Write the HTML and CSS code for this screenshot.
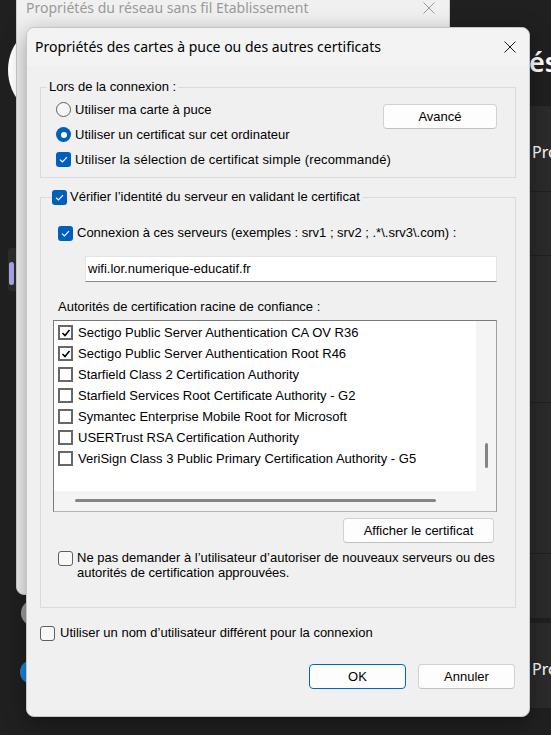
FILE: index.html
```html
<!DOCTYPE html>
<html lang="fr">
<head>
<meta charset="utf-8">
<title>Propriétés des cartes à puce ou des autres certificats</title>
<link rel="stylesheet" href="styles.css">
</head>
<body>
<div class="desktop">
  <div class="settings">
    <aside class="sidebar">
      <div class="avatar"></div>
      <div class="nav-item"><span class="pill"></span></div>
      <div class="dot gray"></div>
      <div class="dot blue"></div>
    </aside>
    <main class="settings-main">
      <h1 class="page-title">Propriétés</h1>
      <div class="rows">
        <div class="srow r1"><span>Propriétés</span></div>
        <div class="srow r2"></div>
        <div class="srow r3"></div>
        <div class="srow r4"></div>
        <div class="srow r5"></div>
        <div class="srow r6"><span>Propriétés</span></div>
      </div>
    </main>
  </div>

  <div class="window back">
    <div class="back-titlebar">
      <span class="back-title">Propriétés du réseau sans fil Etablissement</span>
      <svg class="close back-close" width="12" height="12" viewBox="0 0 12 12"><path d="M0.5 0.5L11.5 11.5M11.5 0.5L0.5 11.5" stroke="#9a9a9a" stroke-width="1" fill="none"/></svg>
    </div>
  </div>

  <div class="window front">
    <div class="titlebar">
      <span class="title">Propriétés des cartes à puce ou des autres certificats</span>
      <svg class="close" width="12" height="12" viewBox="0 0 12 12"><path d="M0.5 0.5L11.5 11.5M11.5 0.5L0.5 11.5" stroke="#1a1a1a" stroke-width="1" fill="none"/></svg>
    </div>
    <div class="dlg-body">
      <div class="group g1">
        <div class="legend">Lors de la connexion :</div>
        <div class="g1-grid">
          <div class="opt r-a"><span class="radio"></span><span>Utiliser ma carte à puce</span></div>
          <div class="opt r-b"><span class="radio on"></span><span>Utiliser un certificat sur cet ordinateur</span></div>
          <button class="btn adv">Avancé</button>
          <div class="opt r-c"><span class="check on"><svg width="15" height="15" viewBox="0 0 15 15"><path d="M4 7.6L6.4 10L11 5.2" stroke="#fff" stroke-width="1.2" fill="none"/></svg></span><span>Utiliser la sélection de certificat simple (recommandé)</span></div>
        </div>
      </div>

      <div class="group g2">
        <div class="legend2"><span class="check on"><svg width="15" height="15" viewBox="0 0 15 15"><path d="M4 7.6L6.4 10L11 5.2" stroke="#fff" stroke-width="1.2" fill="none"/></svg></span><span>Vérifier l’identité du serveur en validant le certificat</span></div>
        <div class="opt servers"><span class="check on"><svg width="15" height="15" viewBox="0 0 15 15"><path d="M4 7.6L6.4 10L11 5.2" stroke="#fff" stroke-width="1.2" fill="none"/></svg></span><span>Connexion à ces serveurs (exemples : srv1 ; srv2 ; .*\.srv3\.com) :</span></div>
        <div class="field">wifi.lor.numerique-educatif.fr</div>
        <div class="list-label">Autorités de certification racine de confiance :</div>
        <div class="listbox">
          <div class="list-content">
            <div class="item"><span class="cbc"><svg width="10" height="10" viewBox="0 0 10 10"><path d="M1.5 5L4 7.5L8.5 2" stroke="#000" stroke-width="1.6" fill="none"/></svg></span><span>Sectigo Public Server Authentication CA OV R36</span></div>
            <div class="item"><span class="cbc"><svg width="10" height="10" viewBox="0 0 10 10"><path d="M1.5 5L4 7.5L8.5 2" stroke="#000" stroke-width="1.6" fill="none"/></svg></span><span>Sectigo Public Server Authentication Root R46</span></div>
            <div class="item"><span class="cbc"></span><span>Starfield Class 2 Certification Authority</span></div>
            <div class="item"><span class="cbc"></span><span>Starfield Services Root Certificate Authority - G2</span></div>
            <div class="item"><span class="cbc"></span><span>Symantec Enterprise Mobile Root for Microsoft</span></div>
            <div class="item"><span class="cbc"></span><span>USERTrust RSA Certification Authority</span></div>
            <div class="item"><span class="cbc"></span><span>VeriSign Class 3 Public Primary Certification Authority - G5</span></div>
          </div>
          <div class="vscroll"><div class="vthumb"></div></div>
          <div class="hscroll"><div class="hthumb"></div></div>
          <div class="corner"></div>
        </div>
        <div class="btn-row"><button class="btn show">Afficher le certificat</button></div>
        <div class="opt multi"><span class="check"></span><span class="multi-text">Ne pas demander à l’utilisateur d’autoriser de nouveaux serveurs ou des autorités de certification approuvées.</span></div>
      </div>

      <div class="opt other-user"><span class="check"></span><span>Utiliser un nom d’utilisateur différent pour la connexion</span></div>

      <div class="footer">
        <button class="btn ok">OK</button>
        <button class="btn">Annuler</button>
      </div>
    </div>
  </div>
</div>
</body>
</html>
```

FILE: styles.css
```css
* { box-sizing: border-box; }
html, body { margin: 0; padding: 0; }
body {
  width: 551px;
  height: 735px;
  overflow: hidden;
  background: #202020;
  font-family: "Liberation Sans", Arial, sans-serif;
  font-size: 13px;
  line-height: 16px;
  color: #000;
}
.desktop { position: relative; width: 551px; height: 735px; overflow: hidden; }

/* Settings app behind */
.settings { position: absolute; left: 0; top: 0; width: 551px; height: 735px; }
.sidebar { position: absolute; left: 0; top: 0; width: 240px; height: 735px; display: flex; flex-direction: column; }
.avatar { margin: 20px 0 0 8px; width: 100px; height: 100px; border-radius: 50%; background: #fff; }
.nav-item { margin: 128px 0 0 8px; width: 220px; height: 43px; border-radius: 4px; background: #2d2d2d; display: flex; align-items: center; }
.pill { width: 5px; height: 23px; margin: 8px 0 0 1px; border-radius: 3px; background: #a9a4e8; }
.dot { border-radius: 50%; }
.dot.gray { margin: 309px 0 0 21px; width: 26px; height: 26px; background: #9d9d9d; }
.dot.blue { margin: 34px 0 0 20px; width: 24px; height: 24px; background: #1a86d8; }

.settings-main { position: absolute; left: 330px; top: 0; width: 240px; display: flex; flex-direction: column; }
.page-title {
  margin: 0; padding: 42px 12px 0 0; height: 83px;
  font-family: "Noto Sans", "Open Sans", sans-serif; font-weight: 600; font-size: 27px; line-height: 40px;
  color: #fff; text-align: right;
}
.rows { margin-top: 23px; display: flex; flex-direction: column; }
.srow {
  background: #2b2b2b; margin-bottom: 1px;
  display: flex; align-items: center; padding: 7px 0 0 202px;
  font-family: "Noto Sans", "Open Sans", sans-serif; font-size: 16px; color: #fff;
}
.r1 { height: 85px; }
.r2 { height: 63px; }
.r3 { height: 146px; }
.r4 { height: 150px; }
.r5 { height: 64px; margin-bottom: 5px; }
.r6 { height: 85px; }

/* windows */
.window { position: absolute; border-radius: 8px; }
.back {
  left: 16px; top: -24px; width: 434px; height: 619px;
  background: #f0f0f0; border: 1px solid #cdcdcd;
}
.back-titlebar { height: 62px; display: flex; align-items: center; padding-left: 9px; }
.back-title { font-family: "Noto Sans", "Open Sans", sans-serif; font-size: 14px; color: #9a9a9a; }
.close { display: block; flex: none; }
.back-close { margin-left: auto; margin-right: 14px; }

.front {
  left: 26px; top: 27px; width: 504px; height: 690px;
  background: #f0f0f0; border: 1px solid #c6c6c6;
  box-shadow: 0 6px 22px rgba(0,0,0,0.35);
  display: flex; flex-direction: column;
}
.titlebar {
  height: 38px; flex: none; background: #f3f3f3; border-radius: 8px 8px 0 0;
  display: flex; align-items: center; padding-left: 8px;
}
.title { font-family: "Noto Sans", "Open Sans", sans-serif; font-size: 14px; color: #000; }
.titlebar .close { margin-left: auto; margin-right: 13px; }

.dlg-body { padding: 0 13px; display: flex; flex-direction: column; }

.group { border: 1px solid #dadada; }
.g1 { margin-top: 21px; height: 91px; }
.legend {
  margin: -9px 0 0 6px; padding: 0 2px; width: fit-content; background: #f0f0f0; height: 16px;
}
.g1-grid {
  margin-top: 2px; padding: 0 18px 0 15px;
  display: grid; grid-template-columns: 1fr auto; grid-template-rows: 25px 25px 25px;
}
.opt { display: flex; align-items: center; gap: 4px; }
.r-a { grid-column: 1; grid-row: 1; }
.r-b { grid-column: 1; grid-row: 2; }
.r-c { grid-column: 1 / -1; grid-row: 3; }
.r-c span:last-child { letter-spacing: 0.15px; }
.adv { grid-column: 2; grid-row: 1 / span 2; align-self: start; margin-top: 7px; width: 114px; }

.radio {
  flex: none; width: 15px; height: 15px; border-radius: 50%;
  border: 1px solid #5f5f5f; background: #f6f6f6;
}
.radio.on { border: none; background: #005fb8; display: flex; align-items: center; justify-content: center; }
.radio.on::after { content: ""; width: 6px; height: 6px; border-radius: 50%; background: #fff; }

.check {
  flex: none; width: 15px; height: 15px; border-radius: 3px;
  border: 1px solid #5f5f5f; background: #f7f7f7; display: block;
}
.check.on { border: none; background: #005fb8; }
.check svg { display: block; }

.btn {
  font-family: "Liberation Sans", Arial, sans-serif; font-size: 13px; color: #000;
  height: 25px; background: #fdfdfd; border: 1px solid #d2d2d2; border-bottom-color: #c2c2c2;
  border-radius: 4px; padding: 0; line-height: 16px;
}

.g2 { margin-top: 19px; height: 411px; display: flex; flex-direction: column; }
.legend2 {
  margin: -9px 0 0 11px; padding-right: 3px; width: fit-content; height: 16px;
  background: #f0f0f0; display: flex; align-items: center; gap: 3px;
}
.servers { margin: 18px 0 0 17px; height: 20px; }
.field {
  margin: 13px 0 0 44px; width: 412px; height: 26px; background: #fff;
  border: 1px solid #e4e4e4; border-bottom-color: #868686; padding-left: 2px;
  display: flex; align-items: center;
}
.list-label { margin: 17px 0 0 17px; height: 16px; }
.listbox {
  margin: 5px 0 0 12px; width: 444px; height: 192px;
  border: 1px solid #7a7a7a; border-right-color: #a0a0a0; border-bottom-color: #b4b4b4;
  display: grid; grid-template-columns: 1fr 20px; grid-template-rows: 1fr 20px;
}
.list-content { background: #fff; padding-top: 1px; overflow: hidden; }
.item { height: 21px; display: flex; align-items: center; gap: 5px; padding-left: 4px; white-space: nowrap; }
.cbc {
  flex: none; width: 15px; height: 15px; border: 2px solid #676767; background: #fff;
  display: flex; align-items: center; justify-content: center;
}
.cbc svg { display: block; }
.vscroll { background: #f4f4f4; padding: 122px 0 0 9px; }
.vthumb { width: 3px; height: 25px; border-radius: 2px; background: #858585; }
.hscroll { background: #f4f4f4; padding: 8px 0 0 21px; }
.hthumb { width: 361px; height: 3px; border-radius: 2px; background: #858585; }
.corner { background: #f4f4f4; }

.btn-row { display: flex; justify-content: flex-end; margin: 6px 21px 0 0; }
.show { width: 151px; }

.multi { margin: 7px 0 0 17px; align-items: flex-start; line-height: 15px; }
.multi .check { margin-top: 1px; }
.multi-text { width: 438px; }

.other-user { margin-top: 17px; height: 16px; gap: 5px; }

.footer { margin-top: 23px; display: flex; justify-content: flex-end; gap: 12px; padding-right: 1px; }
.footer .btn { width: 97px; }
.btn.ok { border: 1px solid #0067c0; }
```
